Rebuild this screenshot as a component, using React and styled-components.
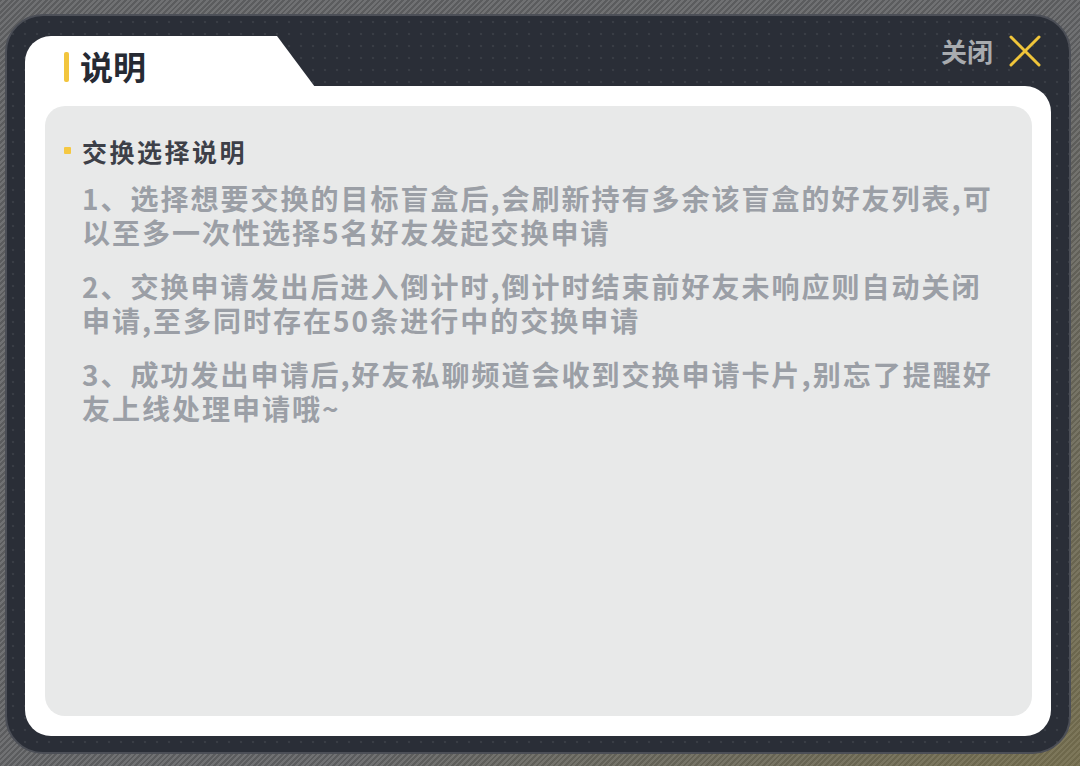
import React from 'react';
import styled, { createGlobalStyle } from 'styled-components';

const GlobalStyle = createGlobalStyle`
  html, body {
    margin: 0;
    padding: 0;
  }
  body {
    font-family: "Noto Sans CJK SC", "Noto Sans", sans-serif;
  }
`;

const Page = styled.div`
  box-sizing: border-box;
  width: 1080px;
  height: 766px;
  padding: 14px 9px 12px 5px;
  display: flex;
  background:
    linear-gradient(135deg, rgba(0, 0, 0, 0) 60%, rgba(150, 130, 40, 0.35) 100%),
    repeating-linear-gradient(135deg, #5b5c5e 0 2px, #707173 2px 4px);
`;

const Frame = styled.div`
  flex: 1;
  box-sizing: border-box;
  border: 2px solid #4c4f57;
  border-radius: 38px;
  padding: 20px 18px 16px 18px;
  display: flex;
  flex-direction: column;
  background-color: #2a2e37;
  background-image: radial-gradient(circle, rgba(255, 255, 255, 0.07) 1px, transparent 1.6px);
  background-size: 12px 12px;
`;

const Header = styled.div`
  display: flex;
  height: 50px;
`;

const Tab = styled.div`
  width: 290px;
  height: 51px;
  background: #fff;
  border-top-left-radius: 26px;
  clip-path: polygon(0 0, 252px 0, 290px 100%, 0 100%);
  display: flex;
  align-items: center;
  padding: 10px 0 0 39px;
  box-sizing: border-box;
`;

const TitleBar = styled.span`
  width: 5px;
  height: 30px;
  border-radius: 2px;
  background: #f2c53d;
  margin-right: 11px;
`;

const Title = styled.h1`
  margin: 0;
  font-size: 33px;
  font-weight: 700;
  color: #262a33;
  line-height: 1;
`;

const Spacer = styled.div`
  flex: 1;
`;

const Close = styled.button`
  align-self: flex-start;
  margin-top: -4px;
  margin-right: 10px;
  display: flex;
  align-items: center;
  gap: 16px;
  background: none;
  border: none;
  padding: 0;
  cursor: pointer;
  font-family: inherit;
  font-size: 26px;
  font-weight: 700;
  color: #a8abaf;
`;

const Body = styled.div`
  flex: 1;
  background: #fff;
  border-radius: 0 26px 26px 26px;
  padding: 20px 19px 20px 20px;
  display: flex;
`;

const Inner = styled.div`
  flex: 1;
  background: #e8e9e9;
  border-radius: 20px;
  padding: 28px 26px 0 37px;
`;

const Section = styled.div`
  display: flex;
  align-items: center;
  position: relative;
  margin-bottom: 13px;
`;

const Bullet = styled.span`
  position: absolute;
  left: -18px;
  top: 50%;
  width: 7px;
  height: 7px;
  margin-top: -4px;
  border-radius: 1px;
  background: #f5c842;
`;

const SectionTitle = styled.h2`
  margin: 0;
  font-size: 25px;
  font-weight: 700;
  letter-spacing: 2.5px;
  color: #3d4048;
  line-height: 34px;
`;

const Para = styled.p`
  margin: 0 0 20px 0;
  font-size: 28px;
  font-weight: 700;
  letter-spacing: 2px;
  line-height: 34px;
  color: #9b9fa6;
`;

const XIcon = () => (
  <svg width="32" height="32" viewBox="0 0 32 32">
    <path d="M2 2 L30 30 M30 2 L2 30" stroke="#f0c53a" strokeWidth="3" strokeLinecap="round" fill="none" />
  </svg>
);

const items = [
  '1、选择想要交换的目标盲盒后,会刷新持有多余该盲盒的好友列表,可以至多一次性选择5名好友发起交换申请',
  '2、交换申请发出后进入倒计时,倒计时结束前好友未响应则自动关闭申请,至多同时存在50条进行中的交换申请',
  '3、成功发出申请后,好友私聊频道会收到交换申请卡片,别忘了提醒好友上线处理申请哦~',
];

const App = () => {
  return (
    <Page>
      <GlobalStyle />
      <Frame>
        <Header>
          <Tab>
            <TitleBar />
            <Title>说明</Title>
          </Tab>
          <Spacer />
          <Close>
            关闭
            <XIcon />
          </Close>
        </Header>
        <Body>
          <Inner>
            <Section>
              <Bullet />
              <SectionTitle>交换选择说明</SectionTitle>
            </Section>
            {items.map((t) => (
              <Para key={t}>{t}</Para>
            ))}
          </Inner>
        </Body>
      </Frame>
    </Page>
  );
};

export default App;
